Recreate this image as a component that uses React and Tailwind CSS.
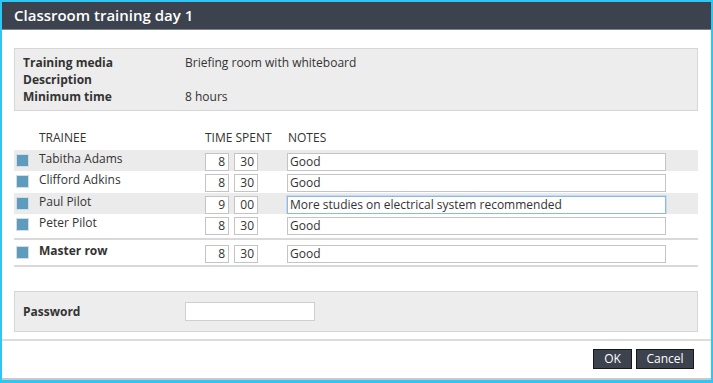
import React from "react";

const rows = [
  { name: "Tabitha Adams", h: "8", m: "30", note: "Good", bg: "bg-[#ebebeb]", hgt: "h-[21px]" },
  { name: "Clifford Adkins", h: "8", m: "30", note: "Good", bg: "bg-white", hgt: "h-[22px]" },
  { name: "Paul Pilot", h: "9", m: "00", note: "More studies on electrical system recommended", bg: "bg-[#ebebeb]", hgt: "h-[21px]", focus: true },
  { name: "Peter Pilot", h: "8", m: "30", note: "Good", bg: "bg-white", hgt: "h-[22px]" },
];

function Check() {
  return (
    <div className="ml-[2px] mt-[4px] h-[13px] w-[13px] shrink-0 border border-[#d3dde3] bg-[#5e9cbd]" />
  );
}

function TimeBox({ v }) {
  return (
    <div className="flex h-[18px] w-[24px] items-center justify-end border border-[#c4c4c4] bg-white pr-[3px] text-[12px] leading-none">
      {v}
    </div>
  );
}

function Notes({ v, focus }) {
  return (
    <div
      className={
        "flex h-[18px] w-[379px] items-center bg-white pl-[2px] text-[12px] leading-none " +
        (focus ? "border border-[#8fb7e0] shadow-[0_0_0_1px_#c4dcf3]" : "border border-[#c4c4c4]")
      }
    >
      {v}
    </div>
  );
}

function Row({ r, bold }) {
  return (
    <div className={"flex items-start " + r.bg + " " + r.hgt}>
      <Check />
      <div className={"ml-[10px] w-[166px] text-[12px] leading-[17px] " + (bold ? "font-bold" : "")}>{r.name}</div>
      <div className="mt-[3px] flex gap-[5px]">
        <TimeBox v={r.h} />
        <TimeBox v={r.m} />
      </div>
      <div className="ml-[29px] mt-[3px]">
        <Notes v={r.note} focus={r.focus} />
      </div>
    </div>
  );
}

export default function App() {
  return (
    <div
      className="h-[383px] w-[713px] border-x-2 border-t-2 border-b-[3px] border-[#2ec6f5] bg-white text-[#333]"
      style={{ fontFamily: '"Open Sans", "DejaVu Sans", sans-serif' }}
    >
      <div className="flex h-full flex-col">
        <div className="flex h-[28px] items-center border-b border-[#7d828a] bg-[#3c434f] pl-[12px] text-[15px] font-semibold text-white">
          Classroom training day 1
        </div>
        <div className="flex flex-1 flex-col pl-[12px] pr-[13px]">
          <div className="mt-[18px] flex h-[63px] flex-col justify-center border border-[#d6d6d6] bg-[#ededed] pl-[8px] text-[12px] leading-[17px]">
            <div className="flex">
              <div className="w-[162px] font-bold">Training media</div>
              <div>Briefing room with whiteboard</div>
            </div>
            <div className="flex">
              <div className="w-[162px] font-bold">Description</div>
              <div></div>
            </div>
            <div className="flex">
              <div className="w-[162px] font-bold">Minimum time</div>
              <div>8 hours</div>
            </div>
          </div>

          <div className="mt-[18px] flex h-[21px] items-start text-[12px] leading-[17px]">
            <div className="ml-[25px] w-[166px]">TRAINEE</div>
            <div className="w-[83px]">TIME SPENT</div>
            <div>NOTES</div>
          </div>

          {rows.map((r) => (
            <Row key={r.name} r={r} />
          ))}
          <div className="mt-[2px] h-[2px] bg-[#d9d9d9]" />
          <div className="flex h-[25px] items-start">
            <div className="flex w-full items-start pt-[2px]">
              <Check />
              <div className="ml-[10px] w-[166px] text-[12px] font-bold leading-[17px]">Master row</div>
              <div className="mt-[3px] flex gap-[5px]">
                <TimeBox v="8" />
                <TimeBox v="30" />
              </div>
              <div className="ml-[29px] mt-[3px]">
                <Notes v="Good" />
              </div>
            </div>
          </div>
          <div className="h-[2px] bg-[#d9d9d9]" />

          <div className="mt-[24px] flex h-[41px] items-center border border-[#d6d6d6] bg-[#ededed] pl-[8px] text-[12px]">
            <div className="w-[162px] font-bold">Password</div>
            <div className="h-[19px] w-[130px] border border-[#cfcfcf] bg-white" />
          </div>
        </div>
        <div className="mt-[7px] h-[2px] bg-[#dcdcdc]" />
        <div className="flex flex-1 items-start justify-end gap-[4px] pr-[17px] pt-[8px]">
          <button className="h-[20px] w-[39px] border border-[#15181c] bg-[#3c434f] text-[12px] leading-none text-white">OK</button>
          <button className="h-[20px] w-[58px] border border-[#15181c] bg-[#3c434f] text-[12px] leading-none text-white">Cancel</button>
        </div>
        <div className="h-[2px] bg-[#c9c9c9]" />
      </div>
    </div>
  );
}
